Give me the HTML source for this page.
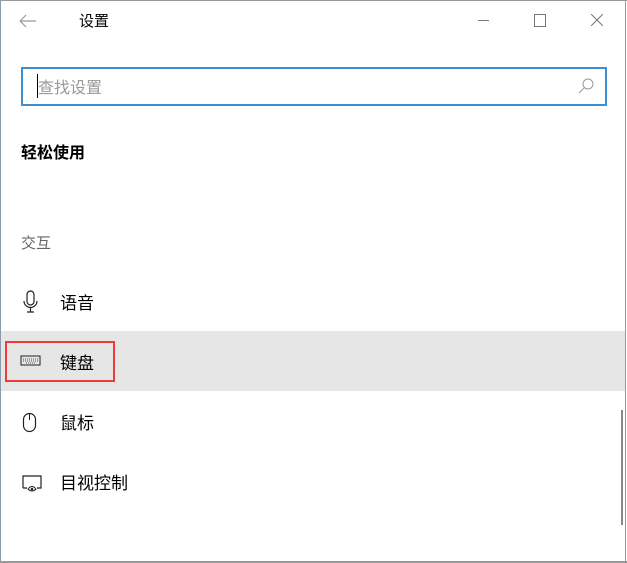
<!DOCTYPE html><html><head><meta charset="utf-8"><style>
body{margin:0;width:627px;height:563px;overflow:hidden;background:#fff;font-family:"Liberation Sans","Noto Sans CJK SC",sans-serif;position:relative}
.a{position:absolute;white-space:nowrap}
</style></head><body>
<div class="a" style="left:0;top:0;width:1px;height:563px;background:#8a9aa8"></div>
<div class="a" style="right:1px;top:0;width:1px;height:563px;background:#999"></div>
<div class="a" style="left:0;top:561px;width:627px;height:2px;background:#999"></div>
<div class="a" style="left:0;top:0;width:627px;height:1px;background:#999"></div>
<svg class="a" style="left:18px;top:13px" width="20" height="16"><path d="M2 8H18M2 8L8 2M2 8L8 14" stroke="#999" stroke-width="1.2" fill="none"/></svg>
<div class="a" style="left:79px;top:10px;font-size:15px;color:#000">设置</div>
<div class="a" style="left:478px;top:20px;width:11px;height:1px;background:#777"></div>
<div class="a" style="left:534px;top:14px;width:10px;height:11px;border:1px solid #777"></div>
<svg class="a" style="left:591px;top:14px" width="12" height="12"><path d="M0 0L12 12M12 0L0 12" stroke="#777" stroke-width="1" fill="none"/></svg>
<div class="a" style="left:21px;top:67px;width:582px;height:35px;border:2px solid #3c8fd2"></div>
<div class="a" style="left:37px;top:74px;width:1px;height:24px;background:#000"></div>
<div class="a" style="left:38px;top:74px;font-size:16px;color:#999">查找设置</div>
<svg class="a" style="left:578px;top:78px" width="16" height="16"><circle cx="10" cy="6" r="5" stroke="#999" fill="none"/><path d="M6.5 9.5L1 15" stroke="#999"/></svg>
<div class="a" style="left:21px;top:139px;font-size:16px;font-weight:bold;color:#000">轻松使用</div>
<div class="a" style="left:21px;top:232px;font-size:15px;color:#666">交互</div>
<svg class="a" style="left:22px;top:290px" width="18" height="24"><rect x="5" y="1" width="7" height="14" rx="3.5" stroke="#222" fill="none" stroke-width="1.2"/><path d="M2 11a6.5 6.5 0 0 0 13 0M8.5 17.5V22M5 22H12" stroke="#222" fill="none" stroke-width="1.2"/></svg>
<div class="a" style="left:60px;top:289px;font-size:17px;color:#000">语音</div>
<div class="a" style="left:1px;top:331px;width:624px;height:60px;background:#e6e6e6"></div>
<div class="a" style="left:5px;top:341px;width:106px;height:37px;border:2px solid #ee3b3b"></div>
<svg class="a" style="left:20px;top:355px" width="22" height="12"><rect x="1" y="1" width="19" height="9" stroke="#222" fill="none"/><path d="M3 4H18M3 6H18M6 8H15" stroke="#555" stroke-dasharray="1 1"/></svg>
<div class="a" style="left:60px;top:349px;font-size:17px;color:#000">键盘</div>
<svg class="a" style="left:22px;top:412px" width="16" height="22"><rect x="1.5" y="1.5" width="12" height="18" rx="6" stroke="#222" fill="none" stroke-width="1.2"/><path d="M7.5 2V8" stroke="#222"/></svg>
<div class="a" style="left:60px;top:409px;font-size:17px;color:#000">鼠标</div>
<svg class="a" style="left:20px;top:474px" width="24" height="20"><path d="M3 14V2H21V14H17M7 14H3" stroke="#222" fill="none" stroke-width="1.2"/><path d="M8 15q4-5 8 0q-4 4-8 0z" stroke="#222" fill="none"/><circle cx="12" cy="15" r="1.3" fill="#222"/></svg>
<div class="a" style="left:60px;top:469px;font-size:17px;color:#000">目视控制</div>
<div class="a" style="left:621px;top:410px;width:2px;height:115px;background:#888"></div>
</body></html>
